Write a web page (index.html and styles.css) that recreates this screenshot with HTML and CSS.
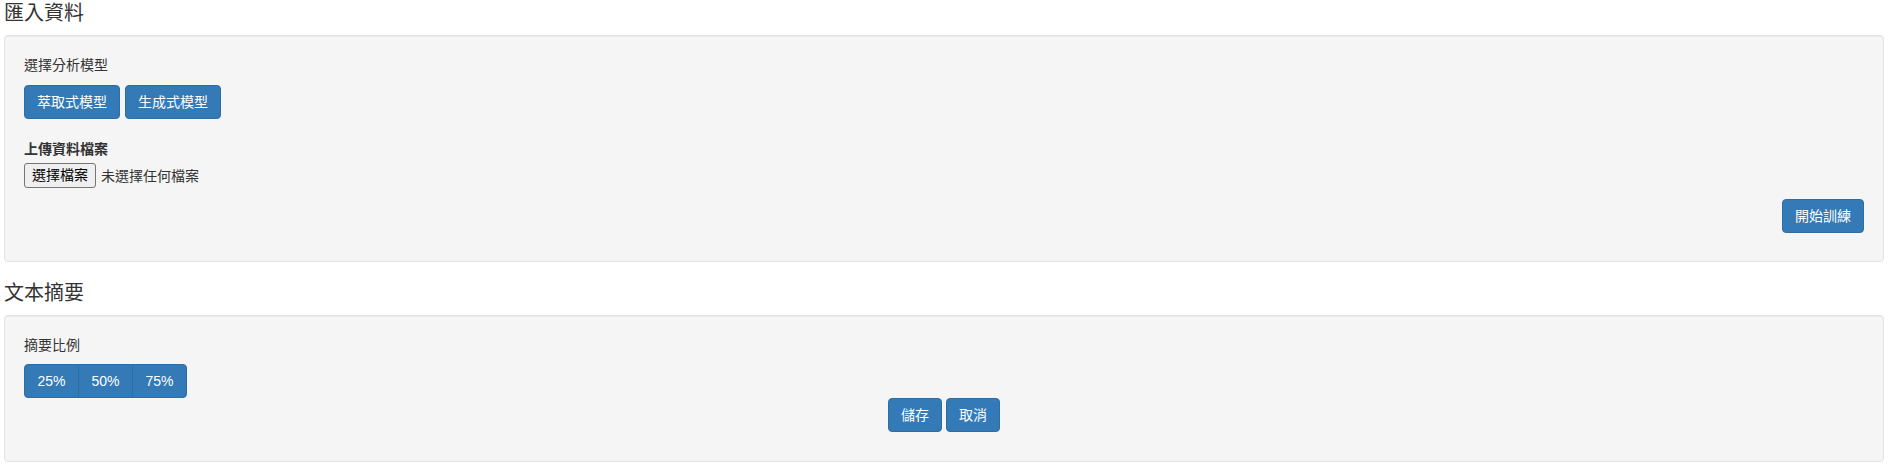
FILE: index.html
```html
<!DOCTYPE html>
<html lang="zh-Hant">
<head>
<meta charset="utf-8">
<title>匯入資料</title>
<link rel="stylesheet" href="styles.css">
</head>
<body>
<div class="page">
  <h4 class="section-title">匯入資料</h4>
  <div class="well">
    <div class="label">選擇分析模型</div>
    <div class="btn-row">
      <button class="btn">萃取式模型</button>
      <button class="btn">生成式模型</button>
    </div>
    <div class="label label-bold upload-label">上傳資料檔案</div>
    <div class="file-row">
      <span class="file-btn">選擇檔案</span>
      <span class="file-text">未選擇任何檔案</span>
    </div>
    <div class="right-row">
      <button class="btn">開始訓練</button>
    </div>
  </div>

  <h4 class="section-title">文本摘要</h4>
  <div class="well">
    <div class="label label-tight">摘要比例</div>
    <div class="btn-group">
      <button class="btn">25%</button>
      <button class="btn">50%</button>
      <button class="btn">75%</button>
    </div>
    <div class="center-row">
      <button class="btn">儲存</button>
      <button class="btn">取消</button>
    </div>
  </div>
</div>
</body>
</html>
```

FILE: styles.css
```css
* { box-sizing: border-box; }
html, body { margin: 0; padding: 0; background: #fff; }
body {
  font-family: "Liberation Sans", "Noto Sans CJK TC", sans-serif;
  font-size: 14px;
  line-height: 20px;
  color: #333;
}
.page {
  padding: 2px 8px 0 4px;
}
.section-title {
  margin: 0 0 10px 0;
  font-size: 20px;
  line-height: 23px;
  font-weight: normal;
  color: #333;
}
.well {
  background: #f5f5f5;
  border: 1px solid #e3e3e3;
  border-radius: 4px;
  padding: 19px;
  margin-bottom: 20px;
  box-shadow: inset 0 1px 1px rgba(0,0,0,0.05);
}
.label {
  display: block;
  margin-bottom: 10px;
}
.label-tight { margin-bottom: 9px; }
.label-bold { font-weight: bold; }
.upload-label { margin-top: 20px; margin-bottom: 4px; }
.btn-row {
  display: flex;
  gap: 5px;
}
.btn {
  font-family: inherit;
  font-size: 14px;
  line-height: 20px;
  padding: 6px 12px;
  color: #fff;
  background: #337ab7;
  border: 1px solid #2e6da4;
  border-radius: 4px;
  margin: 0;
  cursor: pointer;
}
.file-row {
  display: flex;
  align-items: center;
  gap: 5px;
}
.file-btn {
  display: inline-block;
  padding: 1px 7px;
  line-height: 21px;
  background: #efefef;
  border: 1px solid #767676;
  border-radius: 3px;
  color: #000;
}
.file-text { color: #333; }
.right-row {
  display: flex;
  justify-content: flex-end;
  margin-top: 11px;
  margin-bottom: 9px;
}
.btn-group {
  display: flex;
}
.btn-group .btn { border-radius: 0; width: 55px; padding-left: 0; padding-right: 0; text-align: center; }
.btn-group .btn + .btn { margin-left: -1px; }
.btn-group .btn:first-child { border-radius: 4px 0 0 4px; }
.btn-group .btn:last-child { border-radius: 0 4px 4px 0; }
.center-row {
  display: flex;
  justify-content: center;
  gap: 4px;
  margin-bottom: 10px;
}
```
